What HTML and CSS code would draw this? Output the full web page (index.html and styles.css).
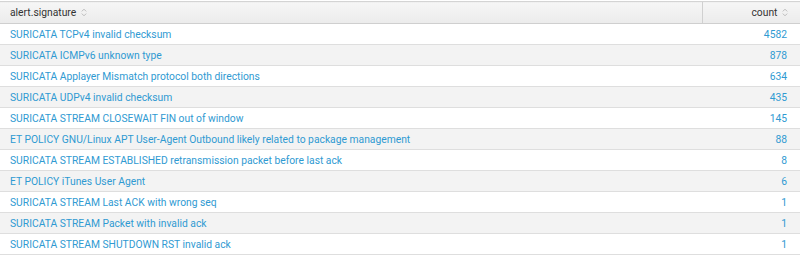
FILE: index.html
```html
<!DOCTYPE html>
<html>
<head>
<meta charset="utf-8">
<link rel="stylesheet" href="styles.css">
</head>
<body>
<table class="results">
  <thead>
    <tr>
      <th class="col-sig">alert.signature <svg class="sort" width="6" height="9" viewBox="0 0 6 9"><path d="M0.8 3.4 L3 1.2 L5.2 3.4 M0.8 5.6 L3 7.8 L5.2 5.6" fill="none" stroke="#bbb" stroke-width="1"/></svg></th>
      <th class="col-count">count <svg class="sort" width="6" height="9" viewBox="0 0 6 9"><path d="M0.8 3.4 L3 1.2 L5.2 3.4 M0.8 5.6 L3 7.8 L5.2 5.6" fill="none" stroke="#bbb" stroke-width="1"/></svg></th>
    </tr>
  </thead>
  <tbody>
    <tr><td>SURICATA TCPv4 invalid checksum</td><td class="num">4582</td></tr>
    <tr><td>SURICATA ICMPv6 unknown type</td><td class="num">878</td></tr>
    <tr><td>SURICATA Applayer Mismatch protocol both directions</td><td class="num">634</td></tr>
    <tr><td>SURICATA UDPv4 invalid checksum</td><td class="num">435</td></tr>
    <tr><td>SURICATA STREAM CLOSEWAIT FIN out of window</td><td class="num">145</td></tr>
    <tr><td>ET POLICY GNU/Linux APT User-Agent Outbound likely related to package management</td><td class="num">88</td></tr>
    <tr><td>SURICATA STREAM ESTABLISHED retransmission packet before last ack</td><td class="num">8</td></tr>
    <tr><td>ET POLICY iTunes User Agent</td><td class="num">6</td></tr>
    <tr><td>SURICATA STREAM Last ACK with wrong seq</td><td class="num">1</td></tr>
    <tr><td>SURICATA STREAM Packet with invalid ack</td><td class="num">1</td></tr>
    <tr><td>SURICATA STREAM SHUTDOWN RST invalid ack</td><td class="num">1</td></tr>
  </tbody>
</table>
</body>
</html>
```

FILE: styles.css
```css
html, body {
  margin: 0;
  padding: 0;
  background: #fff;
}
body {
  padding-top: 1px;
  font-family: Roboto, "Liberation Sans", Arial, sans-serif;
  font-size: 10.3px;
}
.results {
  width: 800px;
  border-collapse: collapse;
  table-layout: fixed;
}
.results th {
  height: 21px;
  padding: 0 10px;
  font-weight: normal;
  color: #333;
  text-align: left;
  background: linear-gradient(#f6f6f6, #ebebeb);
  border-top: 1px solid #d4d4d4;
  border-bottom: 1px solid #cfcfcf;
}
.results th.col-count {
  width: 75px;
  text-align: right;
  padding-right: 12px;
  border-left: 1px solid #d0d0d0;
}
.sort {
  vertical-align: -1px;
  margin-left: 2px;
}
.results td {
  height: 20px;
  padding: 0 10px;
  color: #2f9ad2;
  border-bottom: 1px solid #dedede;
  white-space: nowrap;
}
.results td.num {
  text-align: right;
  padding-right: 13px;
}
.results tbody tr:nth-child(even) td {
  background: #f3f3f3;
}
```
